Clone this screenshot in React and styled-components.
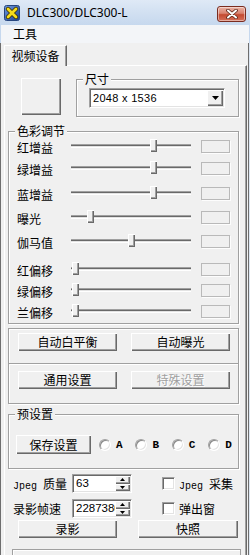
import styled, { createGlobalStyle } from "styled-components";

const GlobalStyle = createGlobalStyle`
  * { box-sizing: border-box; }
  body {
    margin: 0;
    background: #f0f0f0;
    font-family: "Noto Sans CJK SC", "Noto Sans", sans-serif;
    font-size: 12px;
    color: #000;
  }
`;

const sliders = [
  { label: "红增益", left: 79, mt: 4 },
  { label: "绿增益", left: 79, mt: 2 },
  { label: "蓝增益", left: 79, mt: 5 },
  { label: "曝光", left: 16, mt: 4 },
  { label: "伽马值", left: 57, mt: 4 },
  { label: "红偏移", left: 1, mt: 8 },
  { label: "绿偏移", left: 1, mt: 1 },
  { label: "兰偏移", left: 1, mt: 1 },
];

function AppIcon() {
  return (
    <svg width="16" height="16" viewBox="0 0 16 16">
      <defs>
        <linearGradient id="ib" x1="0" y1="0" x2="1" y2="1">
          <stop offset="0" stopColor="#6f9be0" />
          <stop offset="1" stopColor="#1c3f8f" />
        </linearGradient>
      </defs>
      <rect x="0.5" y="0.5" width="15" height="15" rx="2" fill="url(#ib)" stroke="#26457e" />
      <path d="M4 4 L12 12 M12 4 L4 12" stroke="#3a3000" strokeWidth="4.4" strokeLinecap="round" />
      <path d="M4 4 L12 12 M12 4 L4 12" stroke="#f6dc1c" strokeWidth="2.8" strokeLinecap="round" />
    </svg>
  );
}

function CloseGlyph() {
  return (
    <svg width="12" height="10" viewBox="0 0 12 10">
      <path d="M2 1.5 L10 8.5 M10 1.5 L2 8.5" stroke="#5a2418" strokeWidth="3.6" strokeLinecap="round" />
      <path d="M2 1.5 L10 8.5 M10 1.5 L2 8.5" stroke="#fff" strokeWidth="2" strokeLinecap="round" />
    </svg>
  );
}

function Arrow({ up, size = 3 }) {
  const w = size * 2 + 1;
  return (
    <svg width={w} height={size + 1} viewBox={`0 0 ${w} ${size + 1}`}>
      <path
        d={up ? `M0 ${size + 1} L${w / 2} 0 L${w} ${size + 1} Z` : `M0 0 L${w} 0 L${w / 2} ${size + 1} Z`}
        fill="#000"
      />
    </svg>
  );
}

function Spin({ value }) {
  return (
    <SpinBox>
      <SpinEdit>{value}</SpinEdit>
      <SpinButtons>
        <SpinBtn><Arrow up size={2} /></SpinBtn>
        <SpinBtn><Arrow size={2} /></SpinBtn>
      </SpinButtons>
    </SpinBox>
  );
}

export default function App() {
  return (
    <Window>
      <GlobalStyle />
      <TitleBar>
        <AppIcon />
        <Title>DLC300/DLC300-L</Title>
        <CloseButton><CloseGlyph /></CloseButton>
      </TitleBar>
      <MenuBar>
        <MenuItem>工具</MenuItem>
      </MenuBar>
      <Client>
        <TabStrip>
          <Tab>视频设备</Tab>
        </TabStrip>
        <Panel>
          <TopRow>
            <PreviewButton />
            <SizeGroup>
              <Legend>尺寸</Legend>
              <Combo>
                <ComboText>2048 x 1536</ComboText>
                <DropButton><Arrow size={3} /></DropButton>
              </Combo>
            </SizeGroup>
          </TopRow>

          <ColorGroup>
            <Legend>色彩调节</Legend>
            {sliders.map((s) => (
              <SliderRow key={s.label} $mt={s.mt}>
                <RowLabel>{s.label}</RowLabel>
                <Slider>
                  <Track />
                  <Thumb $left={s.left} />
                </Slider>
                <ValueBox />
              </SliderRow>
            ))}
          </ColorGroup>

          <ButtonBox $top={4} $height={36}>
            <Btn $w={99}>自动白平衡</Btn>
            <Btn $w={99}>自动曝光</Btn>
          </ButtonBox>
          <ButtonBox $top={7} $height={40} $noTop>
            <Btn $w={99}>通用设置</Btn>
            <Btn $w={99} disabled>特殊设置</Btn>
          </ButtonBox>

          <PresetGroup>
            <Legend>预设置</Legend>
            <Btn $w={75} $h={19}>保存设置</Btn>
            <Radios>
              {["A", "B", "C", "D"].map((l) => (
                <RadioItem key={l}>
                  <RadioCircle />
                  <Letter>{l}</Letter>
                </RadioItem>
              ))}
            </Radios>
          </PresetGroup>

          <FormRow $mt={5}>
            <FormLabel><Latin>Jpeg </Latin>质量</FormLabel>
            <Spin value="63" />
            <Check />
            <CheckLabel><Latin>Jpeg </Latin>采集</CheckLabel>
          </FormRow>
          <FormRow $mt={6}>
            <FormLabel>录影帧速</FormLabel>
            <Spin value="2287380" />
            <Check />
            <CheckLabel>弹出窗</CheckLabel>
          </FormRow>

          <ActionRow>
            <Btn $w={99}>录影</Btn>
            <Btn $w={100}>快照</Btn>
          </ActionRow>
          <StatusBox />
        </Panel>
      </Client>
    </Window>
  );
}

const Window = styled.div`
  width: 250px;
  height: 555px;
  overflow: hidden;
  display: flex;
  flex-direction: column;
  background: #f0f0f0;
`;

const TitleBar = styled.div`
  height: 25px;
  flex: none;
  display: flex;
  align-items: center;
  padding: 0 4px 0 4px;
  background: linear-gradient(to bottom, #dfe9f6 0%, #d3e1f2 45%, #c6d8ee 100%);
`;

const Title = styled.span`
  margin-left: 7px;
  font-family: "Noto Sans", "Open Sans", sans-serif;
  font-size: 12px;
  color: #000;
`;

const CloseButton = styled.div`
  margin-left: auto;
  align-self: flex-start;
  margin-top: 6px;
  width: 29px;
  height: 16px;
  border: 1px solid #7a2c20;
  border-radius: 3px;
  background: linear-gradient(to bottom, #eab3a6 0%, #d9826f 45%, #c44a31 55%, #d5705a 100%);
  box-shadow: inset 0 0 0 1px rgba(255, 255, 255, 0.45);
  display: flex;
  align-items: center;
  justify-content: center;
`;

const MenuBar = styled.div`
  height: 18px;
  flex: none;
  display: flex;
  align-items: center;
  padding-left: 12px;
  background: #f3f5f8;
  border-left: 1px solid #c6d8ee;
  border-right: 1px solid #c6d8ee;
`;

const MenuItem = styled.span`
  font-size: 12px;
  line-height: 18px;
`;

const Client = styled.div`
  flex: 1;
  display: flex;
  flex-direction: column;
  border-left: 1px solid #6e6e6e;
  border-right: 1px solid #dbe5f1;
  box-shadow: inset -1px 0 #6e6e6e;
  padding: 2px 2px 0 3px;
`;

const TabStrip = styled.div`
  display: flex;
  height: 20px;
  flex: none;
`;

const Tab = styled.div`
  position: relative;
  z-index: 1;
  width: 63px;
  height: 21px;
  background: #f0f0f0;
  border-top: 1px solid #fff;
  border-left: 1px solid #fff;
  border-right: 1px solid #696969;
  box-shadow: inset -1px 0 #a0a0a0;
  text-align: center;
  line-height: 19px;
  font-size: 12px;
`;

const Panel = styled.div`
  flex: 1;
  display: flex;
  flex-direction: column;
  border-top: 1px solid #fff;
  border-left: 1px solid #fff;
  border-right: 1px solid #696969;
  box-shadow: inset -1px 0 #a0a0a0;
  padding: 0 7px 0 3px;
`;

const TopRow = styled.div`
  display: flex;
  align-items: flex-start;
`;

const PreviewButton = styled.div`
  margin: 12px 0 0 13px;
  width: 40px;
  height: 37px;
  background: #f0f0f0;
  box-shadow: inset 1px 1px #fff, inset -1px -1px #696969, inset -2px -2px #a0a0a0;
`;

const GroupBase = styled.div`
  position: relative;
  border: 1px solid #a0a0a0;
  box-shadow: inset 1px 1px #fff, 1px 1px #fff;
`;

const Legend = styled.span`
  position: absolute;
  top: -8px;
  left: 6px;
  padding: 0 2px;
  background: #f0f0f0;
  font-size: 12px;
  line-height: 14px;
`;

const SizeGroup = styled(GroupBase)`
  margin: 13px 0 0 15px;
  width: 163px;
  height: 38px;
  padding: 8px 0 0 12px;
`;

const Combo = styled.div`
  width: 136px;
  height: 20px;
  display: flex;
  align-items: center;
  background: #fff;
  border: 1px solid;
  border-color: #a0a0a0 #fff #fff #a0a0a0;
  box-shadow: inset 1px 1px #696969, inset -1px -1px #e3e3e3;
  padding: 0 1px 0 3px;
`;

const ComboText = styled.span`
  flex: 1;
  font-family: "Liberation Sans", Arial, sans-serif;
  font-size: 11px;
  letter-spacing: 0.3px;
`;

const DropButton = styled.div`
  width: 16px;
  height: 16px;
  display: flex;
  align-items: center;
  justify-content: center;
  background: #f0f0f0;
  box-shadow: inset 1px 1px #fff, inset -1px -1px #696969, inset -2px -2px #a0a0a0;
`;

const ColorGroup = styled(GroupBase)`
  margin-top: 14px;
  height: 193px;
  padding: 0 0 0 8px;
`;

const SliderRow = styled.div`
  display: flex;
  align-items: center;
  height: 20px;
  margin-top: ${(p) => p.$mt}px;
`;

const RowLabel = styled.span`
  width: 54px;
  font-size: 12px;
  padding-top: 3px;
`;

const Slider = styled.div`
  position: relative;
  width: 120px;
  height: 20px;
`;

const Track = styled.div`
  position: absolute;
  left: 0;
  right: 0;
  top: 8px;
  height: 4px;
  border-top: 1px solid #a0a0a0;
  border-bottom: 1px solid #fff;
  background: linear-gradient(to bottom, #696969 50%, #e3e3e3 50%);
`;

const Thumb = styled.div`
  position: absolute;
  top: 3px;
  left: ${(p) => p.$left}px;
  width: 7px;
  height: 13px;
  background: #f0f0f0;
  box-shadow: inset 1px 1px #fff, inset -1px -1px #696969, inset -2px -2px #a0a0a0;
`;

const ValueBox = styled.div`
  margin-left: 10px;
  width: 29px;
  height: 13px;
  border: 1px solid #b9b9b9;
  box-shadow: 1px 1px #fdfdfd;
`;

const ButtonBox = styled(GroupBase)`
  height: ${(p) => p.$height}px;
  display: flex;
  align-items: flex-start;
  gap: 14px;
  padding: ${(p) => p.$top}px 0 0 9px;
  ${(p) => p.$noTop && "border-top: none;"}
  margin-top: ${(p) => (p.$noTop ? 0 : 4)}px;
`;

const Btn = styled.button`
  flex: none;
  width: ${(p) => p.$w}px;
  height: ${(p) => p.$h || 18}px;
  padding: 0;
  border: none;
  background: #f0f0f0;
  font-family: "Noto Sans CJK SC", sans-serif;
  font-size: 12px;
  line-height: 16px;
  color: #000;
  box-shadow: inset 1px 1px #fff, inset -1px -1px #696969, inset -2px -2px #a0a0a0;

  &:disabled {
    color: #a0a0a0;
    text-shadow: 1px 1px #fff;
  }
`;

const PresetGroup = styled(GroupBase)`
  margin-top: 10px;
  height: 55px;
  display: flex;
  align-items: flex-start;
  padding: 20px 0 0 7px;
`;

const Radios = styled.div`
  display: flex;
  margin: 1px 0 0 8px;
  height: 17px;
  align-items: center;
`;

const RadioItem = styled.div`
  width: 36.4px;
  display: flex;
  align-items: center;
`;

const RadioCircle = styled.span`
  width: 12px;
  height: 12px;
  border-radius: 50%;
  background: #fff;
  border: 1px solid;
  border-color: #a0a0a0 #fff #fff #a0a0a0;
  box-shadow: inset 1px 1px #8a8a8a, inset -1px -1px #e3e3e3;
  margin-right: 5px;
`;

const Letter = styled.span`
  font-family: "Liberation Mono", monospace;
  font-size: 11px;
  font-weight: bold;
`;

const FormRow = styled.div`
  display: flex;
  align-items: center;
  height: 19px;
  margin-top: ${(p) => p.$mt}px;
  padding-left: 5px;
`;

const FormLabel = styled.span`
  width: 59px;
  font-size: 12px;
  white-space: nowrap;
`;

const Latin = styled.span`
  font-family: "Liberation Mono", monospace;
  font-size: 10px;
`;

const SpinBox = styled.div`
  width: 60px;
  height: 19px;
  display: flex;
  background: #fff;
  border: 1px solid;
  border-color: #a0a0a0 #fff #fff #a0a0a0;
  box-shadow: inset 1px 1px #696969, inset -1px -1px #e3e3e3;
  padding: 1px 1px 1px 1px;
`;

const SpinEdit = styled.span`
  flex: 1;
  overflow: hidden;
  white-space: nowrap;
  font-family: "Liberation Sans", Arial, sans-serif;
  font-size: 11.5px;
  line-height: 15px;
  padding-left: 2px;
`;

const SpinButtons = styled.div`
  width: 15px;
  display: flex;
  flex-direction: column;
`;

const SpinBtn = styled.div`
  flex: 1;
  display: flex;
  align-items: center;
  justify-content: center;
  background: #f0f0f0;
  box-shadow: inset 1px 1px #fff, inset -1px -1px #696969, inset -2px -2px #a0a0a0;
`;

const Check = styled.span`
  margin-left: 30px;
  width: 13px;
  height: 13px;
  background: #fff;
  border: 1px solid;
  border-color: #a0a0a0 #fff #fff #a0a0a0;
  box-shadow: inset 1px 1px #696969, inset -1px -1px #e3e3e3;
`;

const CheckLabel = styled.span`
  margin-left: 4px;
  font-size: 12px;
  white-space: nowrap;
`;

const ActionRow = styled.div`
  display: flex;
  gap: 21px;
  margin-top: 2px;
  padding-left: 10px;
`;

const StatusBox = styled.div`
  margin: 11px 0 0 4px;
  width: 229px;
  height: 20px;
  flex: none;
  border: 1px solid #a0a0a0;
  box-shadow: inset 1px 1px #fff;
`;
